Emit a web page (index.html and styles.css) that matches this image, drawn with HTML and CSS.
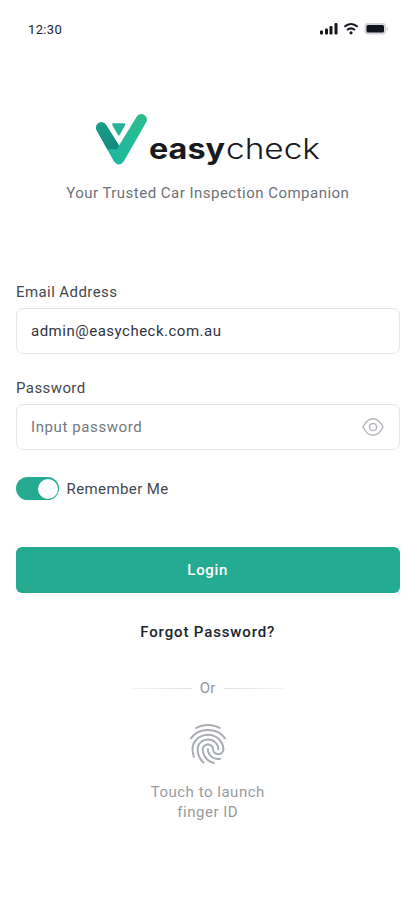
FILE: index.html
```html
<!DOCTYPE html>
<html lang="en">
<head>
<meta charset="utf-8">
<meta name="viewport" content="width=device-width, initial-scale=1">
<title>easycheck – Login</title>
<link rel="stylesheet" href="styles.css">
</head>
<body>
<header class="status">
  <span class="time">12:30</span>
  <svg class="status-icons" width="70" height="14" viewBox="0 0 70 14">
    <g fill="#16181d">
      <rect x="1" y="8.5" width="3" height="4" rx="1"/><rect x="6" y="6.5" width="3" height="6" rx="1"/><rect x="10.5" y="4" width="3" height="8.500" rx="1"/><rect x="15.500" y="1" width="3" height="11.500" rx="1"/>
      <circle cx="32" cy="10.800" r="1.600"/>
    </g>
    <g fill="none" stroke="#16181d" stroke-width="2">
      <path d="M25.300 4.800Q32-.8 38.700 4.800"/><path d="M28 8Q32 4.700 36 8"/>
    </g>
    <rect x="45.500" y="1" width="21.500" height="11.500" rx="3" fill="#d3d5d8"/>
    <rect x="47.500" y="3" width="17.500" height="7.500" rx="1.500" fill="#10141f"/>
    <path d="M67.500 5v4q1.500-.5 1.500-2t-1.500-2z" fill="#c4c6ca"/>
  </svg>
</header>
<main class="screen">
  <svg class="logo" width="226" height="56" viewBox="95 112 226 56" role="img" aria-label="easycheck">
    <defs>
      <linearGradient id="arm" x1="1" y1="0" x2="0" y2="1"><stop offset="0" stop-color="#2bbd8d"/><stop offset="1" stop-color="#1db5a5"/></linearGradient>
      <linearGradient id="fold" x1="0" y1="0" x2="1" y2="1"><stop offset="0" stop-color="#1b9f8c"/><stop offset="1" stop-color="#10877b"/></linearGradient>
    </defs>
    <path d="M96.800 130.500A5.400 5.400 0 0 1 106 124.800L119 145.500 136.500 116.900A5.400 5.400 0 0 1 146.200 122.300L123.700 161.500Q119 167.500 114 161.500Z" fill="url(#arm)"/>
    <path d="M96.800 130.500A5.400 5.400 0 0 1 106 124.800L119 145.500 117 149.500Q110 148.500 107.500 149.800Z" fill="url(#fold)"/>
    <path d="M113.200 123.300H124.200Q126 123.300 125.200 124.900L119.600 135.100Q118.800 136.400 118 135.100L112.300 124.900Q111.500 123.300 113.200 123.300Z" fill="#24b394"/>
    <text class="brand brand-bold" x="149" y="158.500" textLength="76" lengthAdjust="spacingAndGlyphs">easy</text>
    <text class="brand" x="226" y="158.500" textLength="94" lengthAdjust="spacingAndGlyphs">check</text>
  </svg>
  <p class="tagline">Your Trusted Car Inspection Companion</p>
  <form class="form">
    <label class="label" for="email">Email Address</label>
    <div class="field"><input id="email" class="input email" type="text" value="admin@easycheck.com.au"></div>
    <label class="label" for="pass">Password</label>
    <div class="field">
      <input id="pass" class="input pass" type="text" placeholder="Input password">
      <svg width="22" height="20" viewBox="0 0 22 20" fill="none" stroke="#b5b9be" stroke-width="1.500"><path d="M1 10Q5 1.800 11 1.800T21 10Q17 18.200 11 18.200T1 10Z"/><circle cx="11" cy="10" r="3.600"/></svg>
    </div>
    <div class="remember"><span class="toggle"><span class="knob"></span></span><span class="remember-text">Remember Me</span></div>
    <button class="login" type="button">Login</button>
  </form>
  <a class="forgot">Forgot Password?</a>
  <div class="or"><span class="line"></span><span class="or-text">Or</span><span class="line right"></span></div>
  <svg class="finger" width="36" height="40" viewBox="3 2 18 20" fill="#a9adb2"><path d="M17.810 4.470c-.08 0-.16-.02-.23-.06C15.660 3.420 14 3 12.010 3c-1.980 0-3.860.47-5.570 1.410-.24.13-.54.04-.68-.2-.13-.24-.04-.55.2-.68C7.820 2.520 9.860 2 12.010 2c2.130 0 3.990.47 6.030 1.520.25.13.34.43.21.67-.09.18-.26.28-.44.28zM3.500 9.720c-.1 0-.2-.03-.29-.09-.23-.16-.28-.47-.12-.7.99-1.400 2.250-2.500 3.750-3.270C9.980 4.040 14 4.030 17.150 5.650c1.500.77 2.760 1.860 3.750 3.250.16.22.11.54-.12.7-.23.16-.54.11-.7-.12-.9-1.260-2.040-2.250-3.390-2.940-2.870-1.470-6.540-1.470-9.400.01-1.360.7-2.500 1.700-3.400 2.960-.08.14-.23.21-.39.21zm6.250 12.070c-.13 0-.26-.05-.35-.15-.87-.87-1.340-1.430-2.010-2.640-.69-1.230-1.050-2.730-1.050-4.340 0-2.970 2.540-5.390 5.660-5.390s5.660 2.420 5.660 5.390c0 .28-.22.5-.5.5s-.5-.22-.5-.5c0-2.420-2.090-4.390-4.660-4.390-2.570 0-4.660 1.970-4.660 4.390 0 1.440.32 2.770.93 3.850.64 1.150 1.080 1.640 1.850 2.420.19.2.19.51 0 .71-.11.1-.24.15-.37.15zm7.170-1.850c-1.190 0-2.240-.3-3.100-.89-1.490-1.010-2.380-2.650-2.380-4.390 0-.28.22-.5.5-.5s.5.22.5.5c0 1.410.72 2.740 1.940 3.560.71.48 1.540.71 2.540.71.24 0 .64-.03 1.040-.1.27-.05.53.13.58.41.05.27-.13.53-.41.58-.57.11-1.070.12-1.210.12zM14.910 22c-.04 0-.09-.01-.13-.02-1.590-.44-2.630-1.030-3.720-2.100-1.400-1.390-2.170-3.240-2.170-5.220 0-1.620 1.380-2.940 3.080-2.940 1.700 0 3.080 1.320 3.080 2.940 0 1.070.93 1.940 2.080 1.940s2.080-.87 2.080-1.940c0-3.770-3.250-6.830-7.250-6.830-2.840 0-5.440 1.580-6.610 4.030-.39.81-.59 1.760-.59 2.800 0 .78.07 2.010.67 3.610.1.26-.03.55-.29.64-.26.1-.55-.04-.64-.29-.49-1.310-.73-2.610-.73-3.960 0-1.200.23-2.290.68-3.240 1.330-2.790 4.280-4.600 7.510-4.600 4.550 0 8.250 3.510 8.250 7.830 0 1.620-1.380 2.940-3.080 2.940s-3.080-1.320-3.080-2.940c0-1.070-.93-1.940-2.080-1.940s-2.080.87-2.080 1.940c0 1.710.66 3.310 1.870 4.510.95.94 1.860 1.460 3.270 1.850.27.07.42.35.35.61-.05.23-.26.38-.47.38z"/></svg>
  <p class="touch">Touch to launch<br>finger ID</p>
</main>
</body>
</html>
```
FILE: styles.css
```css
* { box-sizing: border-box; }
body { margin: 0; height: 900px; overflow: hidden; background: #fff; color: #434751; font: 15px/20px Roboto, sans-serif; }
.status { display: flex; justify-content: space-between; align-items: center; height: 58px; padding: 0 26px 0 28px; }
.time { font-size: 13px; letter-spacing: .35px; color: #24262b; padding-top: 2px; }
.screen { display: flex; flex-direction: column; align-items: center; padding: 54px 15.500px 0 16px; }
.logo { display: block; }
.brand { font: 300 28px Inter, sans-serif; fill: #181a20; }
.brand-bold { font-weight: 700; }
.tagline { margin: 15px 0 0; color: #6d7178; letter-spacing: .48px; white-space: nowrap; }
.form { display: flex; flex-direction: column; width: 100%; margin-top: 79px; }
.label { height: 20px; letter-spacing: .42px; align-self: flex-start; }
.field { display: flex; align-items: center; height: 46px; margin: 6px 0 24px; padding: 0 15px 0 14px; border: 1px solid #e4e6e8; border-radius: 7px; }
.input { flex: 1; min-width: 0; border: 0; outline: 0; padding: 0; background: none; font: inherit; letter-spacing: .5px; color: #30343e; }
.input::placeholder { color: #73777e; opacity: 1; letter-spacing: .6px; }
.remember { display: flex; align-items: center; gap: 8px; height: 23px; margin-top: 3px; letter-spacing: .4px; }
.remember-text { margin-left: -.5px; }
.toggle { display: flex; justify-content: flex-end; width: 43px; height: 23px; padding: 1.500px; border-radius: 12px; background: #24ab91; }
.knob { width: 20px; height: 20px; border-radius: 50%; background: #fff; }
.login { height: 46px; margin-top: 47px; border: 0; border-radius: 6px; background: #24ab91; color: #fff; font: 500 15px/20px Roboto, sans-serif; letter-spacing: .7px; }
.forgot { margin-top: 29px; font-weight: 500; color: #20232d; letter-spacing: .87px; }
.or { display: flex; align-items: center; gap: 8px; margin-top: 36px; color: #92969b; letter-spacing: .3px; }
.line { width: 60px; height: 1px; background: linear-gradient(to right, #f4f4f5, #dedfe1); }
.right { transform: scaleX(-1); }
.finger { margin-top: 26px; }
.touch { margin: 18px 0 0; text-align: center; color: #979ba0; letter-spacing: .52px; }
```
